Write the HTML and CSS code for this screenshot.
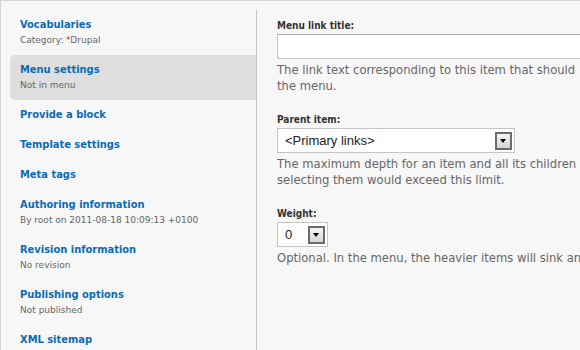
FILE: index.html
```html
<!DOCTYPE html>
<html lang="en">
<head>
    <meta charset="UTF-8">
    <title>Edit node - Vertical tabs</title>
    <link rel="stylesheet" href="styles.css">
</head>
<body>
    <div class="vertical-tabs">
        <!-- Tab list (left) -->
        <ul class="tabs-list">
            <li class="tab">
                <a href="#">Vocabularies</a>
                <span class="summary">Category: <span class="required">*</span>Drupal</span>
            </li>
            <li class="tab selected">
                <a href="#">Menu settings</a>
                <span class="summary">Not in menu</span>
            </li>
            <li class="tab"><a href="#">Provide a block</a></li>
            <li class="tab"><a href="#">Template settings</a></li>
            <li class="tab"><a href="#">Meta tags</a></li>
            <li class="tab">
                <a href="#">Authoring information</a>
                <span class="summary">By root on 2011-08-18 10:09:13 +0100</span>
            </li>
            <li class="tab">
                <a href="#">Revision information</a>
                <span class="summary">No revision</span>
            </li>
            <li class="tab">
                <a href="#">Publishing options</a>
                <span class="summary">Not published</span>
            </li>
            <li class="tab"><a href="#">XML sitemap</a></li>
        </ul>

        <!-- Active pane (right) -->
        <div class="pane">
            <div class="form-item">
                <label>Menu link title:</label>
                <div class="text-input"></div>
                <div class="description">The link text corresponding to this item that should<br>the menu.</div>
            </div>

            <div class="form-item">
                <label>Parent item:</label>
                <div class="select select-wide">
                    <span class="select-value">&lt;Primary links&gt;</span>
                    <span class="select-arrow"></span>
                </div>
                <div class="description">The maximum depth for an item and all its children<br>selecting them would exceed this limit.</div>
            </div>

            <div class="form-item">
                <label>Weight:</label>
                <div class="select select-small">
                    <span class="select-value">0</span>
                    <span class="select-arrow"></span>
                </div>
                <div class="description">Optional. In the menu, the heavier items will sink an</div>
            </div>
        </div>
    </div>
</body>
</html>
```

FILE: styles.css
```css
body {
    margin: 0;
    padding: 0;
    background-color: #f7f7f7;
    font-family: "DejaVu Sans", Verdana, sans-serif;
    overflow: hidden;
    width: 580px;
    height: 350px;
}

.vertical-tabs {
    display: flex;
    height: 350px;
    box-sizing: border-box;
    border-top: 1px solid #d4d4d4;
    border-left: 1px solid #d4d4d4;
}

.tabs-list {
    list-style: none;
    margin: 9px 0 0 9px;
    padding: 0;
    width: 246px;
    flex-shrink: 0;
}

.tab {
    padding: 7px 10px;
    border-radius: 5px 0 0 5px;
}

.tab.selected {
    background-color: #dedede;
}

.tab a {
    display: block;
    font-family: "DejaVu Sans Condensed", "DejaVu Sans", sans-serif;
    font-weight: bold;
    font-size: 11px;
    line-height: 16px;
    color: #0a6bb6;
    text-decoration: none;
}

.summary {
    display: block;
    font-size: 9px;
    line-height: 15px;
    color: #666666;
}

.required {
    color: #ee0000;
    font-size: 8px;
    vertical-align: top;
}

.pane {
    flex: 1;
    margin-top: 9px;
    padding: 8px 0 0 20px;
    border-left: 1px solid #c6c6c6;
    overflow: hidden;
}

.form-item {
    margin-bottom: 18px;
}

.form-item label {
    display: block;
    font-family: "DejaVu Sans Condensed", "DejaVu Sans", sans-serif;
    font-weight: bold;
    font-size: 10px;
    line-height: 15px;
    color: #333333;
    margin-bottom: 1px;
}

.text-input {
    width: 360px;
    height: 23px;
    background-color: #ffffff;
    border: 1px solid #c4c4c4;
    border-top-color: #a8a8a8;
}

.description {
    margin-top: 4px;
    font-size: 11.6px;
    line-height: 15.5px;
    color: #666666;
    white-space: nowrap;
}

.select {
    display: flex;
    align-items: center;
    justify-content: space-between;
    height: 23px;
    background-color: #ffffff;
    border: 1px solid #c4c4c4;
    box-sizing: content-box;
    font-family: "Liberation Sans", Arial, sans-serif;
    font-size: 13px;
    color: #222222;
}

.select-wide {
    width: 236px;
}

.select-small {
    width: 49px;
}

.select-value {
    padding-left: 7px;
}

.select-arrow {
    position: relative;
    width: 13px;
    height: 14px;
    margin-right: 2px;
    border: 2px solid #6b6b6b;
    background: linear-gradient(#f4f4f4, #d4d4d4);
}

.select-arrow::after {
    content: "";
    position: absolute;
    left: 3px;
    top: 5px;
    border-left: 3.5px solid transparent;
    border-right: 3.5px solid transparent;
    border-top: 4px solid #000000;
}
```
